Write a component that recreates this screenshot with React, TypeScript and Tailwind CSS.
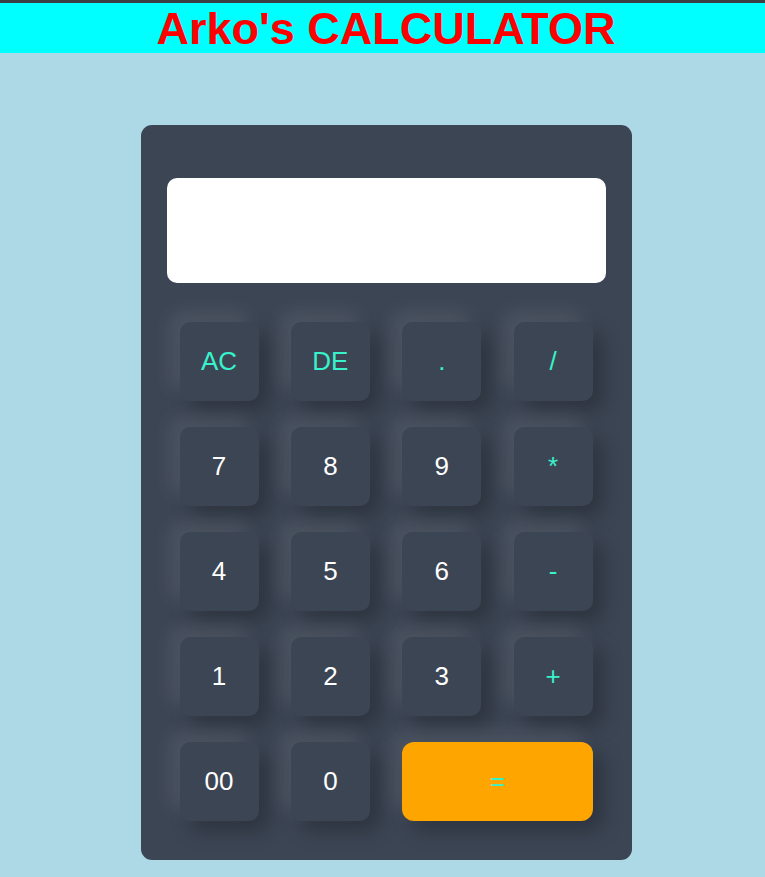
export default function App() {
  const keys: { label: string; op?: boolean; wide?: boolean }[] = [
    { label: 'AC', op: true },
    { label: 'DE', op: true },
    { label: '.', op: true },
    { label: '/', op: true },
    { label: '7' },
    { label: '8' },
    { label: '9' },
    { label: '*', op: true },
    { label: '4' },
    { label: '5' },
    { label: '6' },
    { label: '-', op: true },
    { label: '1' },
    { label: '2' },
    { label: '3' },
    { label: '+', op: true },
    { label: '00' },
    { label: '0' },
    { label: '=', op: true, wide: true },
  ];

  return (
    <div className="min-h-[877px] bg-[#add8e6] font-['Liberation_Sans',Arial,sans-serif]">
      <div className="h-[3px] bg-[#3a3f44]" />
      <header className="h-[50px] bg-[#00ffff] pl-[7px] flex items-center justify-center">
        <h1 className="text-[45px] leading-none font-bold text-[#ff0000]">Arko's CALCULATOR</h1>
      </header>

      <div className="pl-[7px] pt-[72px] pb-[17px]">
        <div className="mx-auto w-[491px] rounded-[11px] bg-[#3c4554] px-[26px] pt-[53px] pb-[39px]">
          <div className="h-[105px] rounded-[10px] bg-white" />
          <div className="mt-[39px] pl-[13px] grid grid-cols-[repeat(4,79px)] gap-x-[32.4px] gap-y-[26px]">
            {keys.map((k) => (
              <button
                key={k.label}
                className={`h-[79px] flex items-center justify-center text-[26px] shadow-[-10px_-10px_20px_rgba(255,255,255,0.09),10px_10px_20px_rgba(0,0,0,0.25)] ${
                  k.wide ? 'col-span-2 rounded-[12px] bg-[#ffa500]' : 'rounded-[10px] bg-[#3c4554]'
                } ${k.op ? 'text-[#38f2cc]' : 'text-white'}`}
              >
                {k.label}
              </button>
            ))}
          </div>
        </div>
      </div>
    </div>
  );
}
